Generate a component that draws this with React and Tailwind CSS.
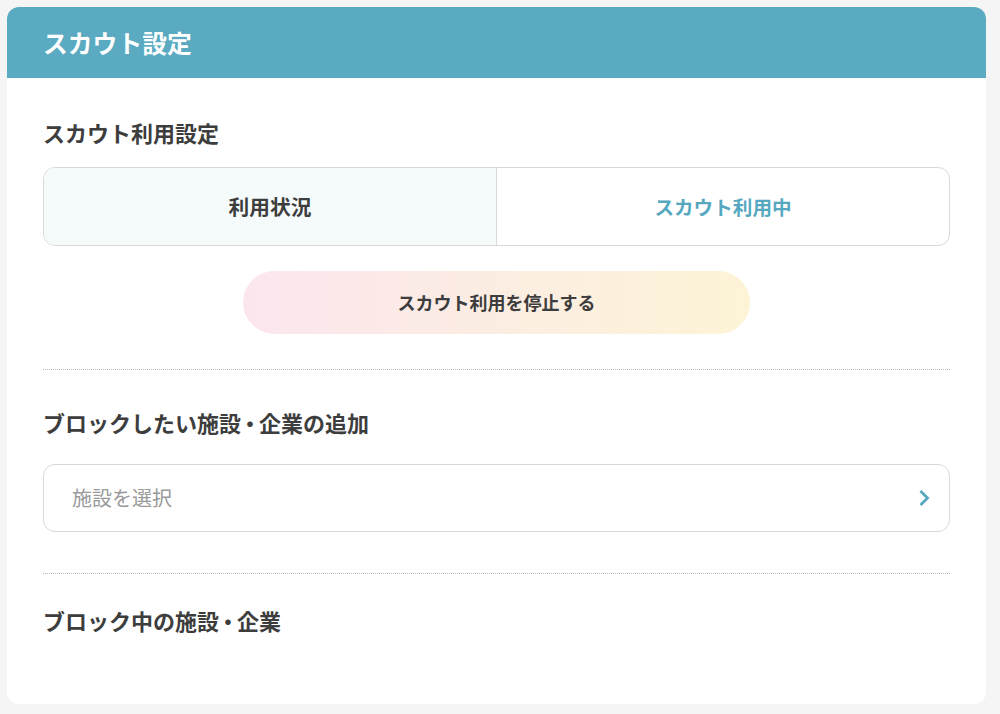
export default function App() {
  const font = { fontFamily: '"Noto Sans CJK JP", "Noto Sans", sans-serif' };
  return (
    <div className="min-h-[714px] w-full bg-[#f5f5f5] pt-[7px] pl-[7px] pr-[14px] pb-[10px]" style={font}>
      <div className="w-[979px] rounded-[12px] bg-white">
        <div className="h-[71px] rounded-t-[12px] bg-[#5aaac1] flex items-center pl-[36px]">
          <h1 className="text-[24.8px] font-bold text-white leading-none -mt-[1px]">スカウト設定</h1>
        </div>
        <div className="px-[36px] pt-[38px] pb-[68px]">
          <h2 className="text-[22px] font-bold text-[#3d3d3d] leading-[32px]">スカウト利用設定</h2>
          <div className="mt-[19px] h-[79px] flex rounded-[12px] border border-[#d9d9d9] overflow-hidden">
            <div className="w-[453px] bg-[#f5fbfb] border-r border-[#d9d9d9] flex items-center justify-center">
              <span className="text-[20.7px] font-bold text-[#3d3d3d]">利用状況</span>
            </div>
            <div className="flex-1 flex items-center justify-center">
              <span className="text-[19.6px] font-bold text-[#55a8c0]">スカウト利用中</span>
            </div>
          </div>
          <div className="mt-[25px] flex justify-center">
            <button className="w-[507px] h-[63px] rounded-full bg-gradient-to-r from-[#fbe6ee] to-[#fdf4d6] flex items-center justify-center">
              <span className="text-[18px] font-bold text-[#3d3d3d]">スカウト利用を停止する</span>
            </button>
          </div>
          <div className="mt-[35px] border-t border-dotted border-[#b8b8b8]" />
          <h2 className="mt-[36px] text-[22px] font-bold text-[#3d3d3d] leading-[32px]">
            ブロックしたい施設<span className="inline-block -mx-[2px]">・</span>企業の追加
          </h2>
          <div className="mt-[26px] h-[68px] rounded-[12px] border border-[#d9d9d9] flex items-center justify-between pl-[28px] pr-[19px]">
            <span className="text-[20px] text-[#9a9a9a]">施設を選択</span>
            <svg width="12" height="18" viewBox="0 0 12 18" fill="none">
              <path d="M2.5 2 L9.5 9 L2.5 16" stroke="#55a8c0" strokeWidth="2.8" strokeLinecap="butt" strokeLinejoin="miter" />
            </svg>
          </div>
          <div className="mt-[41px] border-t border-dotted border-[#b8b8b8]" />
          <h2 className="mt-[30px] text-[22px] font-bold text-[#3d3d3d] leading-[32px]">
            ブロック中の施設<span className="inline-block -mx-[2px]">・</span>企業
          </h2>
        </div>
      </div>
    </div>
  );
}
